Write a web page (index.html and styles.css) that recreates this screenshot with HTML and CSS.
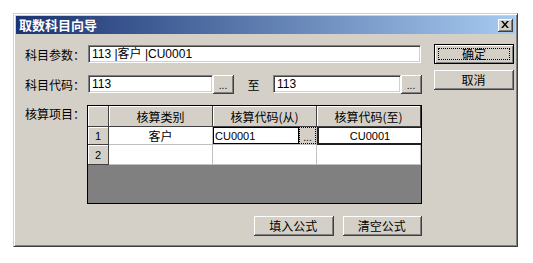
FILE: index.html
```html
<!DOCTYPE html>
<html lang="zh">
    <head>
        <meta charset="utf-8">
        <title>取数科目向导</title>
        <link rel="stylesheet" href="styles.css">
    </head>
    <body>
        <div class="window">
            <div class="titlebar">
                <span class="title">取数科目向导</span>
                <span class="close">
                    <svg width="8" height="7" viewBox="0 0 8 7"><path d="M0 0h2l2 2.5 2-2.5h2L5 3.5 8 7H6L4 4.5 2 7H0l3-3.5z" fill="#000"/></svg>
                </span>
            </div>

            <div class="content">
                <div class="main">
                    <!-- 科目参数 -->
                    <div class="row">
                        <span class="label">科目参数：</span>
                        <div class="field wide">113 |客户 |CU0001</div>
                    </div>

                    <!-- 科目代码 从 / 至 -->
                    <div class="row">
                        <span class="label">科目代码：</span>
                        <div class="field code">113</div>
                        <span class="btn dots">...</span>
                        <span class="to">至</span>
                        <div class="field code2">113</div>
                        <span class="btn dots">...</span>
                    </div>

                    <div class="row grid-row">
                        <span class="label">核算项目：</span>
                        <div class="grid">
                            <div class="cell head corner"></div>
                            <div class="cell head">核算类别</div>
                            <div class="cell head">核算代码(从)</div>
                            <div class="cell head">核算代码(至)</div>

                            <div class="cell rowhead r1">1</div>
                            <div class="cell data r1 center">客户</div>
                            <div class="cell data r1 editing">
                                <span class="edit">CU0001</span>
                                <span class="pick">...</span>
                            </div>
                            <div class="cell data r1 center selected">CU0001</div>

                            <div class="cell rowhead r2">2</div>
                            <div class="cell data r2"></div>
                            <div class="cell data r2"></div>
                            <div class="cell data r2"></div>

                            <div class="blank"></div>
                        </div>
                    </div>

                    <div class="actions">
                        <span class="btn action">填入公式</span>
                        <span class="btn action">清空公式</span>
                    </div>
                </div>

                <div class="side">
                    <span class="btn side-btn default"><span class="focus">确定</span></span>
                    <span class="btn side-btn">取消</span>
                </div>
            </div>
        </div>
    </body>
</html>
```

FILE: styles.css
```css
body {
    margin: 0;
    background: #fff;
    font-family: "Liberation Sans", "Noto Sans CJK SC", sans-serif;
    font-size: 12px;
    color: #000;
}

.window {
    margin: 13px 0 0 13px;
    width: 505px;
    height: 234px;
    box-sizing: border-box;
    background: #d4d0c8;
    border-top: 1px solid #d4d0c8;
    border-left: 1px solid #d4d0c8;
    border-right: 1px solid #404040;
    border-bottom: 1px solid #404040;
    box-shadow: inset 1px 1px #fff, inset -1px -1px #808080;
    padding: 2px;
}

.titlebar {
    height: 18px;
    display: flex;
    align-items: center;
    justify-content: space-between;
    background: linear-gradient(to right, #1a3372, #a6caf0);
    padding: 0 2px 0 3px;
}

.title {
    color: #fff;
    font-weight: bold;
    font-size: 13px;
    font-family: "Noto Sans CJK SC", sans-serif;
    line-height: 18px;
}

.close {
    width: 14px;
    height: 12px;
    display: flex;
    align-items: center;
    justify-content: center;
    background: #d4d0c8;
    border-right: 1px solid #404040;
    border-bottom: 1px solid #404040;
    box-shadow: inset 1px 1px #fff, inset -1px -1px #808080;
}

.content {
    display: flex;
    padding: 11px 0 0 9px;
}

.main {
    width: 397px;
}

.row {
    display: flex;
    align-items: center;
    height: 18px;
    margin-bottom: 12px;
}

.label {
    width: 63px;
    flex: none;
    font-family: "Noto Sans CJK SC", sans-serif;
}

.field {
    height: 18px;
    box-sizing: border-box;
    background: #fff;
    border-top: 1px solid #808080;
    border-left: 1px solid #808080;
    border-right: 1px solid #fff;
    border-bottom: 1px solid #fff;
    box-shadow: inset 1px 1px #404040, inset -1px -1px #d4d0c8;
    padding: 0 3px;
    line-height: 16px;
    white-space: nowrap;
}

.wide {
    width: 333px;
}

.code {
    width: 125px;
}

.code2 {
    width: 128px;
}

.to {
    width: 39px;
    text-align: center;
    font-family: "Noto Sans CJK SC", sans-serif;
}

.btn {
    display: inline-flex;
    align-items: center;
    justify-content: center;
    box-sizing: border-box;
    background: #d4d0c8;
    border-right: 1px solid #404040;
    border-bottom: 1px solid #404040;
    box-shadow: inset 1px 1px #fff, inset -1px -1px #808080;
    font-family: "Noto Sans CJK SC", sans-serif;
}

.dots {
    width: 21px;
    height: 19px;
    font-size: 10px;
    padding-top: 4px;
    font-family: "Liberation Sans", sans-serif;
}

.grid-row {
    align-items: flex-start;
    height: auto;
    margin-top: 4px;
    margin-bottom: 12px;
}

.grid {
    width: 335px;
    height: 99px;
    box-sizing: border-box;
    border: 1px solid #000;
    display: grid;
    grid-template-columns: 21px 104px 104px 104px;
    grid-template-rows: 21px 18px 20px 1fr;
    margin-left: -1px;
    background: #808080;
}

.cell {
    box-sizing: border-box;
    display: flex;
    align-items: center;
    font-family: "Noto Sans CJK SC", sans-serif;
}

.head {
    justify-content: center;
    background: #d4d0c8;
    border-right: 1px solid #404040;
    border-bottom: 1px solid #404040;
    box-shadow: inset 1px 1px #fff;
}

.rowhead {
    justify-content: center;
    background: #d4d0c8;
    border-right: 1px solid #404040;
    border-bottom: 1px solid #404040;
    box-shadow: inset 1px 1px #fff;
    font-family: "Liberation Sans", sans-serif;
    font-size: 11px;
}

.data {
    background: #fff;
    border-right: 1px solid #c0c0c0;
    border-bottom: 1px solid #c0c0c0;
}

.center {
    justify-content: center;
}

.edit {
    flex: 1;
    height: 100%;
    box-sizing: border-box;
    border: 1px solid #000;
    font-family: "Liberation Sans", sans-serif;
    font-size: 11px;
    line-height: 16px;
    padding-left: 1px;
}

.pick {
    width: 17px;
    height: 100%;
    box-sizing: border-box;
    background: #d4d0c8;
    border: 1px dotted #000;
    font-size: 10px;
    display: flex;
    justify-content: center;
    align-items: flex-end;
    font-family: "Liberation Sans", sans-serif;
}

.selected {
    border-left: 2px solid #202020;
    border-top: 1px solid #202020;
    border-bottom: 2px solid #202020;
    border-right: none;
    font-family: "Liberation Sans", sans-serif;
    font-size: 11px;
}

.blank {
    grid-column: 1 / 5;
    background: #808080;
}

.actions {
    display: flex;
    justify-content: flex-end;
    gap: 9px;
    margin-left: 229px;
    width: 168px;
}

.action {
    width: 80px;
    height: 20px;
}

.side {
    display: flex;
    flex-direction: column;
    gap: 6px;
    margin-left: 12px;
    margin-top: -1px;
}

.side-btn {
    width: 80px;
    height: 20px;
}

.default {
    border: 1px solid #000;
    box-shadow: inset 1px 1px #fff, inset -1px -1px #808080;
    padding: 3px;
}

.focus {
    display: flex;
    align-items: center;
    justify-content: center;
    width: 100%;
    height: 100%;
    box-sizing: border-box;
    border: 1px dotted #000;
    line-height: 1;
}
```
